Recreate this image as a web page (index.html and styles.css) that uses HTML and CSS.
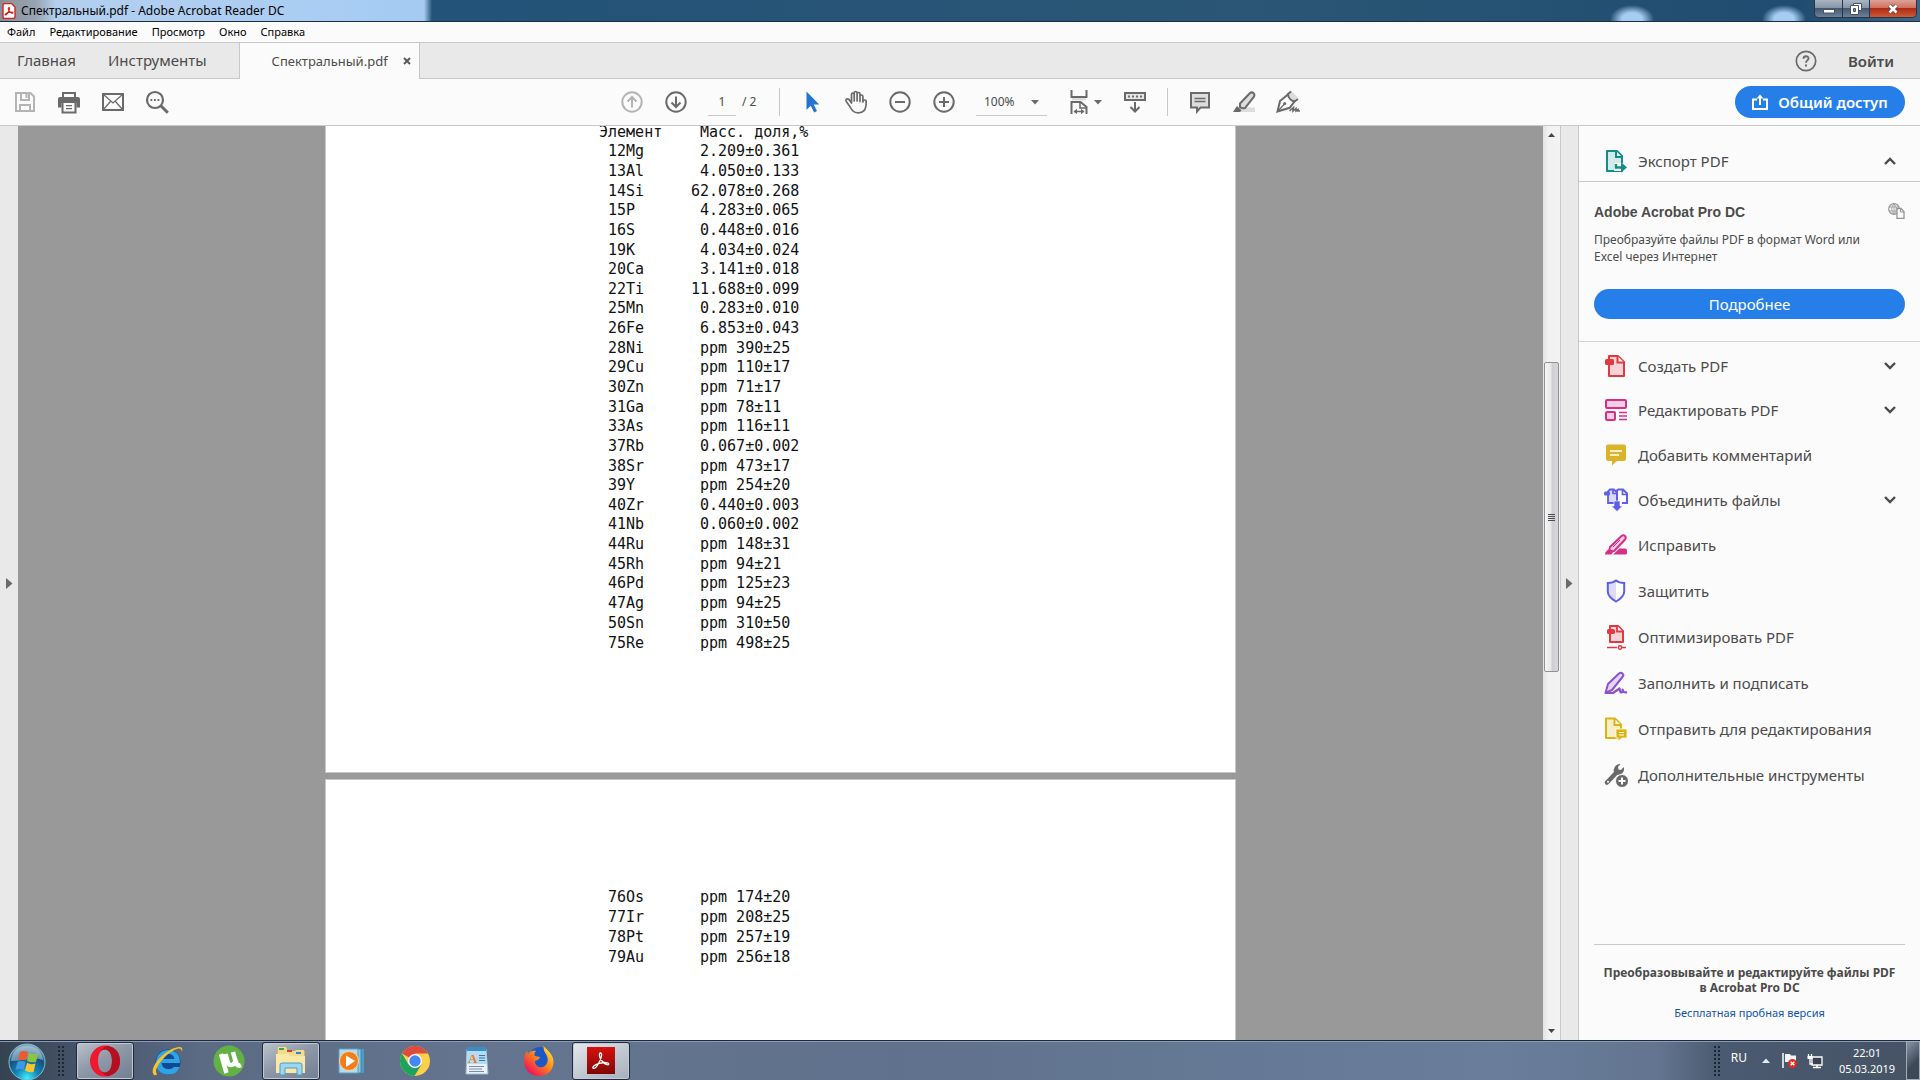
FILE: index.html
```html
<!DOCTYPE html>
<html lang="ru">
<head>
<meta charset="utf-8">
<title>Спектральный.pdf - Adobe Acrobat Reader DC</title>
<link rel="stylesheet" href="styles.css">
</head>
<body>
<header class="titlebar">
  <svg class="app-icon" width="14" height="16" viewBox="0 0 14 16"><path d="M1 2q0-1.500 1.500-1.500h7L13 4v10q0 1.500-1.500 1.500h-9Q1 15.500 1 14z" fill="#fff" stroke="#d8201d" stroke-width="1.400"/><path d="M7 4.500c1.200 0 .3 2-.3 3.500-.8 2-2.300 4.500-3.400 4-.9-.6 1.200-2.100 3.400-2.600 2-.4 4.300-.5 4.300.4 0 1-2.300.3-3.600-1.300C6.300 7.200 5.900 4.500 7 4.500z" fill="none" stroke="#d8201d" stroke-width="1.100"/></svg>
  <h1 class="window-title">Спектральный.pdf - Adobe Acrobat Reader DC</h1>
  <div class="window-buttons">
    <button class="win-btn win-min" aria-label="Свернуть"><svg width="14" height="12" viewBox="0 0 14 12"><rect x="1.500" y="6.500" width="11" height="3.500" fill="#fff" stroke="#4a5366"/></svg></button>
    <button class="win-btn win-max" aria-label="Восстановить"><svg width="14" height="14" viewBox="0 0 14 14"><path d="M4.500 1.500h8v7h-8z" fill="#fff" stroke="#4a5366"/><path d="M1.500 3.500h8v9h-8z" fill="#fff" stroke="#4a5366"/><path d="M4.500 6.500h2v3h-2z" fill="#7d8898" stroke="#4a5366"/></svg></button>
    <button class="win-btn win-close" aria-label="Закрыть"><svg width="14" height="12" viewBox="0 0 14 12"><path d="M3.500 2.500l7 7M10.500 2.500l-7 7" stroke="#5c3a3a" stroke-width="4"/><path d="M3.500 2.500l7 7M10.500 2.500l-7 7" stroke="#fff" stroke-width="2.600"/></svg></button>
  </div>
</header>

<nav class="menubar">
  <button>Файл</button><button>Редактирование</button><button>Просмотр</button><button>Окно</button><button>Справка</button>
</nav>

<div class="tabbar">
  <button class="tab-link">Главная</button>
  <button class="tab-link">Инструменты</button>
  <div class="doc-tab">
    <span>Спектральный.pdf</span>
    <button class="tab-close" aria-label="Закрыть вкладку"><svg width="8" height="8" viewBox="0 0 8 8"><path d="M1 1l6 6M7 1L1 7" stroke="#5a5a5a" stroke-width="2"/></svg></button>
  </div>
  <div class="tab-right">
    <button class="help" aria-label="Помощь"><svg width="22" height="22" viewBox="0 0 22 22" fill="none" stroke="#6a6a6a"><circle cx="11" cy="11" r="9.700" stroke-width="1.700"/><path d="M8.500 8.800c0-3.300 5-3.200 5-.4 0 2-2.500 2-2.500 4.400" stroke-width="1.900"/><path d="M11 14.500v2" stroke-width="2"/></svg></button>
    <button class="login">Войти</button>
  </div>
</div>

<div class="toolbar">
  <div class="tools-left">
    <button aria-label="Сохранить"><svg width="24" height="24" viewBox="0 0 24 24" fill="none" stroke="#b4b4b4" stroke-width="2"><path d="M3 3h14.500L21 6.500V21H3z"/><path d="M8 3v7h8V3M7 21v-6h10v6"/><path d="M13.500 4v4" stroke-width="2"/></svg></button>
    <button aria-label="Печать"><svg width="24" height="24" viewBox="0 0 24 24"><path d="M5 2h14v6h-2V4H7v4H5z" fill="#6a6a6a"/><path d="M1 9q0-2 2-2h18q2 0 2 2v8.500h-3.500V13h-15v4.500H1z" fill="#6a6a6a"/><path d="M5.500 13v9.500h13V13" fill="none" stroke="#6a6a6a" stroke-width="2"/><path d="M9 15.700h6M9 18.700h6" stroke="#6a6a6a" stroke-width="1.200"/></svg></button>
    <button aria-label="Отправить по почте"><svg width="24" height="24" viewBox="0 0 24 24" fill="none" stroke="#6a6a6a"><path d="M2 4h20v16H2z" stroke-width="2"/><path d="M2.500 4.500L12 13l9.500-8.500M2.500 19.500l7-8M21.500 19.500l-7-8" stroke-width="1.200"/></svg></button>
    <button aria-label="Поиск"><svg width="24" height="24" viewBox="0 0 24 24" fill="none" stroke="#6a6a6a"><circle cx="10" cy="10" r="8" stroke-width="2.200"/><path d="M15.800 15.800l7 7" stroke-width="3"/><path d="M5.500 10h1.800M9 10h1.800M12.500 10h1.800" stroke-width="1.800"/></svg></button>
  </div>
  <div class="tools-center">
    <button aria-label="Предыдущая страница"><svg width="24" height="24" viewBox="0 0 24 24" fill="none" stroke="#b4b4b4" stroke-width="2"><circle cx="12" cy="12" r="9.700"/><path d="M12 17.500V7M7.500 11.500L12 7l4.500 4.500"/></svg></button>
    <button aria-label="Следующая страница"><svg width="24" height="24" viewBox="0 0 24 24" fill="none" stroke="#6a6a6a" stroke-width="2"><circle cx="12" cy="12" r="9.700"/><path d="M12 6.500V17M7.500 12.500L12 17l4.500-4.500"/></svg></button>
    <div class="page-box">
      <input class="page-input" type="text" value="1" aria-label="Номер страницы">
      <span class="page-total">/ 2</span>
    </div>
    <span class="sep"></span>
    <button aria-label="Выделение"><svg width="24" height="24" viewBox="0 0 24 24"><path d="M6.500 1.500v18.300l4.300-4 3.300 6.700 2.900-1.400-3.300-6.500h5.500z" fill="#2274d0"/></svg></button>
    <button aria-label="Рука"><svg width="24" height="24" viewBox="0 0 24 24" fill="none" stroke="#6a6a6a" stroke-width="1.700" stroke-linejoin="round" stroke-linecap="round"><path d="M7.500 13V4.600c0-2 2.700-2 2.700 0V11M10.200 11V3c0-2 2.900-2 2.900 0v8M13.100 11V4c0-2 2.900-2 2.900 0v7.500M16 11.500V6.500c0-2 2.900-2 2.900 0V12M18.900 12c.2-2.800 3.400-2.500 3.300-.3 0 5-.7 7.200-2.200 8.900-2.600 2.900-8.500 2.900-11 .4-2-2-3.500-5.300-6.700-9.500-1.300-1.800.8-3.500 2.600-2 1 .8 1.800 2.200 2.600 3.500"/></svg></button>
    <button aria-label="Уменьшить"><svg width="24" height="24" viewBox="0 0 24 24" fill="none" stroke="#6a6a6a" stroke-width="2"><circle cx="12" cy="12" r="9.700"/><path d="M7 12h10"/></svg></button>
    <button aria-label="Увеличить"><svg width="24" height="24" viewBox="0 0 24 24" fill="none" stroke="#6a6a6a" stroke-width="2"><circle cx="12" cy="12" r="9.700"/><path d="M7 12h10M12 7v10"/></svg></button>
    <div class="zoom-box">
      <select class="zoom-select" aria-label="Масштаб"><option>100%</option></select>
      <svg class="caret" width="8" height="5" viewBox="0 0 8 5"><path d="M0 0h8L4 4.500z" fill="#6a6a6a"/></svg>
    </div>
    <button class="fit" aria-label="По ширине"><svg width="24" height="26" viewBox="0 0 24 26" fill="none" stroke="#6a6a6a" stroke-width="2"><path d="M5 10h14" stroke="#ddd" stroke-width="3"/><path d="M4.500 1v7h15V1M4.500 25V13h9l6 5v7"/><path d="M13 13v6h6" stroke-width="1.500"/><path d="M7.500 22.500h9" stroke-width="1.500"/><path d="M10 19.700v5.600L6.500 22.500zM14 19.700v5.600l3.500-2.800z" fill="#6a6a6a" stroke="none"/></svg><svg width="8" height="5" viewBox="0 0 8 5"><path d="M0 0h8L4 4.500z" fill="#6a6a6a"/></svg></button>
    <button aria-label="Прокрутка"><svg width="24" height="24" viewBox="0 0 24 24" fill="none" stroke="#6a6a6a" stroke-width="2"><path d="M2 3h20v7H2z" fill="#e6e6e6"/><path d="M5 6.500h14" stroke-dasharray="2 2"/><path d="M12 12v9M7.500 17l4.500 4.500 4.500-4.500"/></svg></button>
    <span class="sep"></span>
    <button aria-label="Комментарий"><svg width="24" height="24" viewBox="0 0 24 24"><path d="M3 3h18v14.500h-8.500L9 21.500v-4H3z" fill="#ddd" stroke="#6a6a6a" stroke-width="2"/><path d="M6.500 8.500h11M6.500 11.500h11" stroke="#6a6a6a" stroke-width="1.400"/></svg></button>
    <button aria-label="Выделить текст"><svg width="24" height="24" viewBox="0 0 24 24"><path d="M12 17.500h11V22H5z" fill="#ddd"/><path d="M8 13.500L17.800 3.200q2-1.700 3.800 0 1.500 1.600.2 3.700L13 18q-3 .8-5-1z" fill="#ddd" stroke="#6a6a6a" stroke-width="2"/><path d="M5 16l4.500 4.200L8 22H1z" fill="#6a6a6a"/></svg></button>
    <button aria-label="Подписать"><svg width="24" height="24" viewBox="0 0 24 24" fill="none" stroke="#6a6a6a" stroke-width="2"><path d="M12 4l3-3.500 7 7L18 11z" fill="#ddd" stroke="none"/><path d="M1.500 21.500L4 11l8-6.500c.3 3 3 6.500 6.500 7l-4.800 6.300z"/><path d="M11.500 4.500l3.500-3M18.500 11.500l3.500-2.500" /><path d="M1.500 21.500l6.500-7" stroke-width="1.300"/><circle cx="8.700" cy="13.500" r="1.500" fill="#6a6a6a" stroke="none"/><path d="M13.500 21l4-3.500-.5 3.500 3-2.500v2.500l2-1.500v1.500h2" stroke-width="1.600"/></svg></button>
  </div>
  <div class="tools-right">
    <button class="share"><svg width="16" height="17" viewBox="0 0 16 17" fill="none" stroke="#fff" stroke-width="2"><path d="M5 5.500H1V15h14V5.500h-4M8 11V2"/><path d="M4.500 4.500L8 .5l3.500 4z" fill="#fff" stroke="none"/></svg>Общий доступ</button>
  </div>
</div>

<div class="workspace">
  <div class="side-strip"><button aria-label="Открыть панель навигации"><svg width="7" height="11" viewBox="0 0 7 11"><path d="M0 0l6.500 5.500L0 11z" fill="#6a6a6a"/></svg></button></div>
  <main class="canvas">
    <section class="page page-one">
      <table class="data data-long">
        <thead><tr><th>Элемент</th><th>Масс. доля,%</th></tr></thead>
        <tbody>
          <tr><td>12Mg</td><td>2.209±0.361</td></tr>
          <tr><td>13Al</td><td>4.050±0.133</td></tr>
          <tr><td>14Si</td><td class="wide">62.078±0.268</td></tr>
          <tr><td>15P</td><td>4.283±0.065</td></tr>
          <tr><td>16S</td><td>0.448±0.016</td></tr>
          <tr><td>19K</td><td>4.034±0.024</td></tr>
          <tr><td>20Ca</td><td>3.141±0.018</td></tr>
          <tr><td>22Ti</td><td class="wide">11.688±0.099</td></tr>
          <tr><td>25Mn</td><td>0.283±0.010</td></tr>
          <tr><td>26Fe</td><td>6.853±0.043</td></tr>
          <tr><td>28Ni</td><td>ppm 390±25</td></tr>
          <tr><td>29Cu</td><td>ppm 110±17</td></tr>
          <tr><td>30Zn</td><td>ppm 71±17</td></tr>
          <tr><td>31Ga</td><td>ppm 78±11</td></tr>
          <tr><td>33As</td><td>ppm 116±11</td></tr>
          <tr><td>37Rb</td><td>0.067±0.002</td></tr>
          <tr><td>38Sr</td><td>ppm 473±17</td></tr>
          <tr><td>39Y</td><td>ppm 254±20</td></tr>
          <tr><td>40Zr</td><td>0.440±0.003</td></tr>
          <tr><td>41Nb</td><td>0.060±0.002</td></tr>
          <tr><td>44Ru</td><td>ppm 148±31</td></tr>
          <tr><td>45Rh</td><td>ppm 94±21</td></tr>
          <tr><td>46Pd</td><td>ppm 125±23</td></tr>
          <tr><td>47Ag</td><td>ppm 94±25</td></tr>
          <tr><td>50Sn</td><td>ppm 310±50</td></tr>
          <tr><td>75Re</td><td>ppm 498±25</td></tr>
        </tbody>
      </table>
    </section>
    <section class="page page-two">
      <table class="data data-short">
        <tbody>
          <tr><td>76Os</td><td>ppm 174±20</td></tr>
          <tr><td>77Ir</td><td>ppm 208±25</td></tr>
          <tr><td>78Pt</td><td>ppm 257±19</td></tr>
          <tr><td>79Au</td><td>ppm 256±18</td></tr>
        </tbody>
      </table>
    </section>
  </main>
  <div class="scrollbar">
    <svg width="7" height="4" viewBox="0 0 7 4"><path d="M0 4h7L3.500 0z" fill="#444"/></svg>
    <div class="track"><div class="thumb"><i></i><i></i><i></i><i></i></div></div>
    <svg width="7" height="4" viewBox="0 0 7 4"><path d="M0 0h7L3.500 4z" fill="#444"/></svg>
  </div>
  <div class="side-strip strip-right"><button aria-label="Скрыть панель инструментов"><svg width="7" height="11" viewBox="0 0 7 11"><path d="M0 0l6.500 5.500L0 11z" fill="#6a6a6a"/></svg></button></div>
  <aside class="panel">
    <button class="tool export">
      <svg width="24" height="24" viewBox="0 0 24 24"><path d="M3 2h10l5 5v15H3z" fill="#d0ebe8" stroke="#138d8a" stroke-width="2" stroke-linejoin="round"/><path d="M12 2v6h6" fill="#fff" stroke="#138d8a" stroke-width="2"/><path d="M11 14l-1 8h10v-8z" fill="#fbfbfb"/><path d="M12 15v3.500h6" fill="none" stroke="#138d8a" stroke-width="2.400"/><path d="M17 13l6 5.500-6 5z" fill="#138d8a"/></svg>
      <span>Экспорт PDF</span>
      <svg class="chev" width="12" height="8" viewBox="0 0 12 8"><path d="M1 7l5-5 5 5" fill="none" stroke="#4b4b4b" stroke-width="2.400"/></svg>
    </button>
    <section class="promo">
      <div class="promo-head">
        <h2>Adobe Acrobat Pro DC</h2>
        <svg width="17" height="16" viewBox="0 0 17 16" fill="none" stroke="#959595"><circle cx="6" cy="6" r="5.300" stroke-width="1.200"/><path d="M.8 4h10.400M.8 8h10M6 .7c-3 3-3 7.500 0 10.600M6 .7c3 3 3 7.500 0 10.600M6 .7v10.600" stroke-width=".8"/><path d="M9 5.500h4l3 3v7H9z" fill="#fbfbfb" stroke-width="1.300"/><path d="M12.500 5.500V9H16" /></svg>
      </div>
      <p>Преобразуйте файлы PDF в формат Word или Excel через Интернет</p>
      <button class="more">Подробнее</button>
    </section>
    <div class="tool-list">
      <button class="tool fold"><svg width="24" height="24" viewBox="0 0 24 24"><path d="M5 2h9l6 6v14H5z" fill="#f5d3d6" stroke="#de3b41" stroke-width="2" stroke-linejoin="round"/><path d="M13.500 2v6.500H20" fill="#fff" stroke="#de3b41" stroke-width="2"/><rect x="1" y="5" width="9" height="6" rx="1.500" fill="#de3b41"/></svg><span>Создать PDF</span><svg class="chev" width="12" height="8" viewBox="0 0 12 8"><path d="M1 1l5 5 5-5" fill="none" stroke="#4b4b4b" stroke-width="2.400"/></svg></button>
      <button class="tool fold"><svg width="24" height="24" viewBox="0 0 24 24" fill="#f4cfe3" stroke="#d62f88" stroke-width="2"><rect x="2" y="2" width="20" height="8" rx="1"/><rect x="2" y="14" width="9" height="8" rx="1"/><path d="M15 14.500h8M15 18h8M15 21.500h8" stroke-width="1.300"/></svg><span>Редактировать PDF</span><svg class="chev" width="12" height="8" viewBox="0 0 12 8"><path d="M1 1l5 5 5-5" fill="none" stroke="#4b4b4b" stroke-width="2.400"/></svg></button>
      <button class="tool"><svg width="24" height="24" viewBox="0 0 24 24"><path d="M4 1.500h16q2 0 2 2V16q0 2-2 2h-7l-5 4.500V18H4q-2 0-2-2V3.500q0-2 2-2z" fill="#dab428"/><path d="M6 8h12M6 12h9" stroke="#fff" stroke-width="1.600"/></svg><span>Добавить комментарий</span></button>
      <button class="tool fold"><svg width="24" height="24" viewBox="0 0 24 24"><path d="M4 3.500l2-2h4l3 3V15H4z" fill="#dad9f9" stroke="#5f5ee6" stroke-width="1.800"/><path d="M13 15V3q0-1.500 1.500-1.500H19l4 4V15h-5" fill="#fff" stroke="#5f5ee6" stroke-width="2"/><path d="M9 1.500v4h4M18.500 2v4.500H23" fill="none" stroke="#5f5ee6" stroke-width="1.700"/><rect x="0" y="3.500" width="6" height="4" rx="1.500" fill="#5f5ee6"/><path d="M10 13h6v5h2.500L13 23.500 7.500 18H10z" fill="#5f5ee6" stroke="#fbfbfb" stroke-width=".6"/></svg><span>Объединить файлы</span><svg class="chev" width="12" height="8" viewBox="0 0 12 8"><path d="M1 1l5 5 5-5" fill="none" stroke="#4b4b4b" stroke-width="2.400"/></svg></button>
      <button class="tool"><svg width="24" height="24" viewBox="0 0 24 24"><path d="M6 14L17.500 3q2-1.500 3.500 0t0 3.500L10 18q-3 .5-4-.5T6 14z" fill="#f7d0e5" stroke="#d62f88" stroke-width="2"/><path d="M9 14l7-7" stroke="#d62f88"/><path d="M5 16l4 4-2 1.500H1q0-3 4-5.500zM9 21.500l6.500-6H21q2 0 2 2V20q0 1.500-1.500 1.500z" fill="#d62f88"/></svg><span>Исправить</span></button>
      <button class="tool"><svg width="24" height="24" viewBox="0 0 24 24"><path d="M12 2q3 2.500 8.500 2.500v8c0 5-4 7.500-8.500 10-4.500-2.500-8.500-5-8.500-10v-8Q9 4.500 12 2z" fill="#fff"/><path d="M12 2v20.500c-4.500-2.500-8.500-5-8.500-10v-8Q9 4.500 12 2z" fill="#dcdbf8"/><path d="M12 1.500q3 2.500 8.200 2.500v8.500c0 5-3.700 7.500-8.200 10-4.500-2.500-8.200-5-8.200-10V4Q9 4 12 1.500z" fill="none" stroke="#5f5ee6" stroke-width="2"/></svg><span>Защитить</span></button>
      <button class="tool"><svg width="24" height="26" viewBox="0 0 24 26"><path d="M6 2h8l5 5v11H6z" fill="#f5d3d6" stroke="#de3b41" stroke-width="2" stroke-linejoin="round"/><path d="M13 2v5.500h6" fill="#fff" stroke="#de3b41" stroke-width="1.800"/><rect x="3" y="5" width="8" height="5" rx="1.500" fill="#de3b41"/><path d="M3 23.500h10M18 23.500h4" stroke="#de3b41" stroke-width="1.700"/><circle cx="16" cy="23.500" r="1.700" fill="none" stroke="#de3b41" stroke-width="1.500"/></svg><span>Оптимизировать PDF</span></button>
      <button class="tool"><svg width="24" height="24" viewBox="0 0 24 24" fill="none" stroke="#8c52cf" stroke-width="2" stroke-linejoin="round"><path d="M1.500 22l2.500-9L15 2.500q1.800-1.500 3.500 0t0 3.500L8 19z" fill="#e4d7f5"/><path d="M1.500 22H9l6.500-4.500q.5 4 2 4 1.500-.5 1-3 1 4 4.500 2.500" stroke-width="2.200"/></svg><span>Заполнить и подписать</span></button>
      <button class="tool"><svg width="24" height="24" viewBox="0 0 24 24"><path d="M2 1.500h9l6 6V21H2z" fill="#f6efcb" stroke="#dcb50c" stroke-width="2" stroke-linejoin="round"/><path d="M10.500 2v6H17" fill="#fff" stroke="#dcb50c" stroke-width="2"/><path d="M13 12h10v9h-5l-4 3v-3h-2v-9z" fill="#dcb50c" stroke="#fbfbfb" stroke-width=".8"/><path d="M15 15.500h5M15 18h5" stroke="#fff" stroke-width="1.200"/></svg><span>Отправить для редактирования</span></button>
      <button class="tool"><svg width="24" height="24" viewBox="0 0 24 24"><path d="M3 19.500L13 9" stroke="#6a6a6a" stroke-width="4.500" stroke-linecap="round"/><path d="M11 3.500q2-3 5.500-2.500L14 4l.5 2.500L17 7l2.500-3q1.500 3-1 6-2.500 2.500-6 1.500L10 9.500q-1-3 1-6z" fill="#6a6a6a"/><circle cx="4" cy="18.700" r="1" fill="#fff"/><circle cx="18" cy="18" r="6.500" fill="#6a6a6a" stroke="#fbfbfb"/><path d="M14.500 18h7M18 14.500v7" stroke="#fff" stroke-width="2"/></svg><span>Дополнительные инструменты</span></button>
    </div>
    <footer class="trial">
      <p>Преобразовывайте и редактируйте файлы PDF<br>в Acrobat Pro DC</p>
      <a href="#trial">Бесплатная пробная версия</a>
    </footer>
  </aside>
</div>

<footer class="taskbar">
  <button class="start" aria-label="Пуск"><svg width="38" height="38" viewBox="0 0 38 38"><defs><radialGradient id="orb" cx=".5" cy=".95" r=".9"><stop offset="0" stop-color="#3ff0ff"/><stop offset=".35" stop-color="#1387b8"/><stop offset=".7" stop-color="#15517c"/><stop offset="1" stop-color="#7ea5be"/></radialGradient></defs><circle cx="19" cy="19" r="18" fill="url(#orb)" stroke="#82bdd4"/><path d="M3 18Q5 3 19 3t16 14q-8-3-16-1T3 18z" fill="#d3e4ee" opacity=".45"/><path d="M12 9q4-2 8 0l-2 8.500q-4-2-8 0z" fill="#f0592a"/><path d="M21 10q4 2 9 .5L28 19q-5 1-9-1z" fill="#8cc63e"/><path d="M9.500 19q4-2 8 0l-2 8q-4-2-8 0z" fill="#3e9ae0"/><path d="M19 20q4 2 8.500.5l-2 8.500q-4.500 1-8.500-1.500z" fill="#fdc52c"/></svg></button>
  <span class="grip"></span>
  <div class="apps">
    <button class="app running" aria-label="Opera"><svg width="32" height="32" viewBox="0 0 32 32"><path fill-rule="evenodd" d="M16 .5a15 15.500 0 1 0 0 31 15 15.500 0 1 0 0-31zM16 4.500c4.500 0 7 5 7 11.500s-2.500 11.500-7 11.500S9 22.500 9 16s2.500-11.500 7-11.500z" fill="#f0182e"/><path d="M19 .8q12 3 12 15.200T19 31.200q-4-1-7-4.700 2 1 4 1c4.500 0 7-5 7-11.500S20.500 4.500 16 4.500q-2 0-4 1Q15 1.500 19 .8z" fill="#b5101f"/></svg></button>
    <button class="app" aria-label="Internet Explorer"><svg width="34" height="32" viewBox="0 0 34 32"><circle cx="18" cy="17" r="12.500" fill="#0d4a92"/><path d="M24.500 18H11.500q1 6 7 6 4 0 5-2h6q-2 7.500-11.500 7.500Q6.500 29 6 17.500 7 5.500 18.500 5 30 6 30 18zM12 14h12.500q-1-5-6.200-5T12 14z" fill="#2fa3e6"/><path d="M4 30C-2 24 14 3 30 2q3 0 2 5-.5-4-3.500-3.500C17 6 2 25 7 29q-1 2-3 1z" fill="#f7c22c"/></svg></button>
    <button class="app" aria-label="uTorrent"><svg width="32" height="32" viewBox="0 0 32 32"><circle cx="16" cy="16" r="15.500" fill="#63b045"/><path d="M8 9l5.500 19M12.500 9l2.500 9q1.500 3 5 1.500 3-2 2-5L20 7M22 14l2 5.500q1 2 4 .5" fill="none" stroke="#fff" stroke-width="4.500"/></svg></button>
    <button class="app running" aria-label="Проводник"><svg width="34" height="32" viewBox="0 0 34 32"><path d="M3 3h8l2 3h18v22H3z" fill="#d6b45a"/><path d="M4 2h8l2 4h7l1-1h8v6H4z" fill="#f3dc8c"/><path d="M5 3h5v2H5z" fill="#34a84a"/><path d="M13 5h5v2h-5z" fill="#d8402c"/><path d="M22 7h5v2h-5z" fill="#2f83d6"/><path d="M2 9h12l2 2h15v17H2z" fill="#f9e8a6"/><path d="M6 20q0-2 2-2h18q2 0 2 2v10h-5v-7H11v7H6z" fill="#9bd7ef" stroke="#4f9cc4"/></svg></button>
    <button class="app" aria-label="Windows Media Player"><svg width="30" height="28" viewBox="0 0 30 28"><path d="M6 2h20v24H6z" fill="#4c9ac6"/><path d="M4 2h19v24H4z" fill="#8cc8e4" stroke="#4588ae"/><path d="M1 2h19v24H1z" fill="#b4dcee" stroke="#5a9fc2"/><circle cx="11" cy="14" r="9.500" fill="#f07e1c" stroke="#fbd3a2"/><path d="M8 8.500L17 14l-9 6z" fill="#fff"/></svg></button>
    <button class="app" aria-label="Google Chrome"><svg width="30" height="30" viewBox="0 0 30 30"><circle cx="15" cy="15" r="15" fill="#fcd04b"/><path d="M15 15L2 7.500A15 15 0 0 1 28 7.500H15z" fill="#dc4b3e"/><path d="M2 7.500A15 15 0 0 0 14.500 30L21.500 18.500 15 15 8.500 18.500z" fill="#1da260"/><path d="M8 7.500h20H15v7z" fill="#dc4b3e"/><circle cx="15" cy="15" r="7" fill="#fff"/><circle cx="15" cy="15" r="5.700" fill="#4587f3"/></svg></button>
    <button class="app" aria-label="WordPad"><svg width="24" height="28" viewBox="0 0 24 28"><path d="M2 2h19l2 25H1z" fill="#e9f2fa" stroke="#9ebcd4"/><path d="M2 0h19v4H2z" fill="#3a8ec7"/><path d="M2 4h19l.8 13H1.500z" fill="#b3dcf2"/><path d="M14 8.500h6M14 11h6M14 13.500h6" stroke="#3c74a8" stroke-width="1.200"/><path d="M4 19.500h15M4 22h13M4 24.500h15" stroke="#7e8ca0"/><text x="3" y="16" class="wordpad-letter">A</text></svg></button>
    <button class="app" aria-label="Firefox"><svg width="32" height="32" viewBox="0 0 32 32"><defs><linearGradient id="fox" x1=".9" y1=".1" x2=".2" y2=".9"><stop offset="0" stop-color="#ffe03a"/><stop offset=".45" stop-color="#ff8a16"/><stop offset="1" stop-color="#f0145a"/></linearGradient></defs><circle cx="17" cy="14" r="12" fill="#1c58c8"/><path d="M20 1c5 4 11 9 10.500 17C30 26 24 31 16 31S1 25 1 16c0-4 1-7 3-10l1 3c2-3 5-4 8-3-2 2-2 4-1 5l5 1q-1 3-5 4c0 5 4 7 8 6 5-2 6-8 3-13-2-3-3-5-2-8z" fill="url(#fox)"/></svg></button>
    <button class="app running active" aria-label="Adobe Acrobat Reader"><svg width="28" height="28" viewBox="0 0 28 28"><defs><linearGradient id="pdf" x1="0" y1="0" x2="0" y2="1"><stop offset="0" stop-color="#d8100c"/><stop offset="1" stop-color="#7d0705"/></linearGradient></defs><path d="M0 0h28v27H0z" fill="url(#pdf)"/><path d="M13.500 6c2 0 1 4-.5 7.500-2 4.500-5 8.500-6.800 7.800-1.600-1 2-4 6.300-5 4-1 9.300-1.300 9.300.7 0 2-4.500 0-6.800-3C12.500 11.500 11.500 6 13.500 6z" fill="none" stroke="#fff" stroke-width="1.300"/></svg></button>
  </div>
  <div class="tray">
    <span class="grip"></span>
    <span class="lang">RU</span>
    <button class="tray-up" aria-label="Отображать скрытые значки"><svg width="8" height="5" viewBox="0 0 8 5"><path d="M0 5l4-4.500L8 5z" fill="#e8ecf2"/></svg></button>
    <svg width="17" height="17" viewBox="0 0 17 17"><path d="M2 1v15" stroke="#fff" stroke-width="1.500"/><path d="M4 2h5l1 1.500h5V10H4z" fill="#f2f4f7"/><circle cx="11.500" cy="11.500" r="4.500" fill="#dc2e22"/><path d="M9.700 9.700l3.600 3.600M13.300 9.700l-3.600 3.600" stroke="#fff" stroke-width="1.500"/></svg>
    <svg width="16" height="16" viewBox="0 0 16 16"><path d="M5 4h10v8H5z" fill="#3a4250" stroke="#fff" stroke-width="1.300"/><path d="M6 14.500h8M10 12v2" stroke="#fff" stroke-width="1.500"/><path d="M1.500 1v3M4.500 1v3M3 5v6h3" stroke="#fff" stroke-width="1.300" fill="none"/><path d="M.5 3h5v3h-5z" fill="#fff"/></svg>
    <div class="clock"><span>22:01</span><span>05.03.2019</span></div>
    <button class="show-desktop" aria-label="Свернуть все окна"></button>
  </div>
</footer>
</body>
</html>
```
FILE: styles.css
```css
* { box-sizing: border-box; }
body {
  margin: 0;
  height: 100vh;
  display: flex;
  flex-direction: column;
  overflow: hidden;
  background: #fbfbfb;
  color: #4b4b4b;
  font: 12px/16px "Noto Sans", "Open Sans", sans-serif;
}
button {
  margin: 0;
  padding: 0;
  border: 0;
  background: none;
  color: inherit;
  font: inherit;
}
svg { display: block; flex: none; }
h1, h2, p { margin: 0; }

/* Window frame */
.titlebar {
  display: flex;
  align-items: center;
  flex: none;
  height: 22px;
  padding: 0 3px 0 2px;
  gap: 5px;
  border-bottom: 1px solid #1c2c42;
  background:
    radial-gradient(ellipse 22px 14px at 1632px 19px, #a5cdf2 45%, transparent),
    radial-gradient(ellipse 22px 14px at 1784px 19px, #a5cdf2 45%, transparent),
    linear-gradient(90deg, #8a8f96 0, #98a4b2 36px, #b4cfee 56px, #aacdf2 300px, #a5cbf3 424px, #235379 432px, #2b5675 1250px, #1f4c70 1800px, #3f6684 100%);
}
.window-title {
  flex: 1;
  color: #000;
  font-size: 12px;
  font-weight: 400;
}
.window-buttons {
  display: flex;
  align-self: flex-start;
  height: 18px;
  border: 1px solid #26354a;
  border-top: 0;
  border-radius: 0 0 5px 5px;
  overflow: hidden;
}
.win-btn {
  display: flex;
  align-items: center;
  justify-content: center;
  background: linear-gradient(#a9b5c3 0, #8796a7 45%, #45586f 50%, #6c8299 100%);
}
.win-min { width: 28px; border-right: 1px solid #26354a; }
.win-max { width: 27px; border-right: 1px solid #26354a; }
.win-close {
  width: 46px;
  background: linear-gradient(#dba396 0, #cf7262 45%, #b12a15 50%, #cc5a35 100%);
}

.menubar {
  display: flex;
  flex: none;
  align-items: center;
  gap: 14px;
  height: 21px;
  padding: 0 7px;
  border-bottom: 1px solid #c8c8c8;
  color: #000;
  font-size: 11px;
}

/* Tabs */
.tabbar {
  display: flex;
  flex: none;
  height: 36px;
  background: #e9e9e9;
  font-size: 15px;
}
.tab-link { padding-bottom: 1px; border-bottom: 1px solid #c8c8c8; }
.tab-link:first-child { padding-left: 17px; padding-right: 16px; }
.tab-link:nth-child(2) { padding-left: 16px; padding-right: 32px; }
.doc-tab {
  display: flex;
  align-items: center;
  gap: 15px;
  width: 181px;
  padding-left: 32px;
  border: solid #c8c8c8;
  border-width: 0 1px;
  background: #fbfbfb;
  font-size: 13px;
}
.tab-right {
  display: flex;
  flex: 1;
  align-items: center;
  justify-content: flex-end;
  gap: 31px;
  padding-right: 26px;
  border-bottom: 1px solid #c8c8c8;
}
.login { font-weight: 600; }

/* Toolbar */
.toolbar {
  display: grid;
  grid-template-columns: 1fr auto 1fr;
  align-items: center;
  flex: none;
  height: 47px;
  padding: 0 13px;
  border-bottom: 1px solid #c8c8c8;
}
.tools-left { display: flex; gap: 20px; }
.tools-center { display: flex; align-items: center; gap: 20px; }
.tools-right { display: flex; justify-content: flex-end; padding-right: 2px; }
.page-box { display: flex; align-items: center; gap: 6px; }
.page-input {
  width: 28px;
  height: 28px;
  padding: 0;
  border: 0;
  border-bottom: 1px solid #c8c8c8;
  background: none;
  color: inherit;
  font: inherit;
  text-align: center;
}
.page-total { width: 17px; white-space: nowrap; }
.sep { width: 1px; height: 28px; background: #c8c8c8; }
.zoom-box { position: relative; width: 71px; }
.zoom-select {
  width: 100%;
  height: 28px;
  padding: 0 8px;
  appearance: none;
  border: 0;
  border-bottom: 1px solid #c8c8c8;
  border-radius: 0;
  background: none;
  color: inherit;
  font: inherit;
}
.caret { position: absolute; right: 8px; top: 12px; }
.fit { display: flex; align-items: center; gap: 3px; width: 36px; }
.share {
  display: flex;
  align-items: center;
  justify-content: center;
  gap: 10px;
  width: 170px;
  height: 32px;
  border-radius: 16px;
  background: #267fe9;
  color: #fff;
  font-size: 15px;
  font-weight: 600;
}

/* Document area */
.workspace { display: flex; flex: 1; min-height: 0; }
.side-strip {
  display: flex;
  align-items: center;
  justify-content: center;
  flex: none;
  width: 18px;
  background: #e9e9e9;
}
.strip-right { width: 19px; border: solid #c8c8c8; border-width: 0 1px; }
.canvas {
  flex: 1;
  overflow: hidden;
  background: #999;
}
.page {
  width: 911px;
  margin: 0 auto 6px;
  border: 1px solid #c8c8c8;
  background: #fff;
}
.page-one { margin-top: -3px; padding: 0 0 119px 273px; border-top: 0; }
.page-two { padding: 108px 0 400px 273px; }
.data {
  border-collapse: collapse;
  color: #111;
  font: 15px/19px "DejaVu Sans Mono", monospace;
}
.data-long { height: 530px; }
.data-short { height: 79px; }
.data th { padding: 0; font-weight: 400; text-align: left; }
.data td { padding: 0 0 0 9px; }
.data th:first-child, .data td:first-child { width: 92px; }
.data th + th { padding-left: 9px; }
.data .wide { padding-left: 0; }

.scrollbar {
  display: flex;
  flex-direction: column;
  align-items: center;
  flex: none;
  width: 17px;
  padding: 7px 0;
  background: linear-gradient(90deg, #e3e3e3, #f1f1f1 30%, #f3f3f3);
}
.track { flex: 1; padding-top: 225px; }
.thumb {
  display: flex;
  flex-direction: column;
  align-items: center;
  justify-content: center;
  gap: 1px;
  width: 15px;
  height: 310px;
  border: 1px solid #8f8f94;
  border-radius: 2px;
  background: linear-gradient(90deg, #f6f6f6 0, #e8e8ea 45%, #cfcfd3 55%, #d8d8dc 100%);
}
.thumb i { width: 7px; height: 1px; background: #4c4c50; }

/* Tools panel */
.panel {
  display: flex;
  flex-direction: column;
  flex: none;
  width: 341px;
}
.tool {
  display: flex;
  align-items: center;
  gap: 10px;
  width: 100%;
  height: 46px;
  padding: 0 24px 0 25px;
  font-size: 15px;
  text-align: left;
}
.tool span { flex: 1; white-space: nowrap; }
.fold { height: 44px; }
.export { height: 56px; padding-top: 15px; padding-bottom: 0; border-bottom: 1px solid #c8c8c8; }
.promo {
  padding: 21px 15px 22px;
  border-bottom: 1px solid #d2d2d2;
}
.promo-head { display: flex; justify-content: space-between; }
.promo h2 {
  font: bold 14px/18px "Liberation Sans", Arial, sans-serif;
}
.promo p { margin-top: 10px; padding-right: 20px; line-height: 17px; }
.more {
  display: block;
  width: 100%;
  height: 30px;
  margin-top: 24px;
  border-radius: 15px;
  background: #267fe9;
  color: #fff;
  font-size: 15px;
}
.tool-list { padding-top: 2px; }
.trial {
  margin: auto 15px 0;
  padding: 20px 0;
  border-top: 1px solid #c8c8c8;
  line-height: 15px;
  text-align: center;
}
.trial p { font-weight: 700; white-space: nowrap; }
.trial a {
  display: block;
  margin-top: 10px;
  color: #0d54a8;
  font-size: 11px;
  text-decoration: none;
}

/* Taskbar */
.taskbar {
  display: flex;
  align-items: center;
  flex: none;
  height: 40px;
  border-top: 1px solid #1d2a3d;
  box-shadow: inset 0 1px #8b9db6;
  background: linear-gradient(90deg, #35424f 0, #46546a 80px, #5b6b84 200px, #65758f 500px, #5f718c 900px, #6a7e9c 1500px, #62748f 1660px, #4a5a70 1720px, #465365 100%);
  color: #fff;
}
.start { margin: 3px 12px 0 8px; }
.grip {
  width: 8px;
  height: 30px;
  background: radial-gradient(circle at 1px 1px, #1c2634 1px, transparent 1px) 0 0 / 4px 4px;
}
.apps { display: flex; gap: 4px; margin-left: 10px; }
.app {
  display: flex;
  align-items: center;
  justify-content: center;
  width: 58px;
  height: 38px;
}
.running {
  border: 1px solid #20293a;
  border-radius: 3px;
  box-shadow: inset 0 0 0 1px #c3cad5;
  background: linear-gradient(150deg, #bcc3cd 0, #8f99a8 45%, #717e92 100%);
}
.active { background: linear-gradient(150deg, #e6e9ee 0, #c3cad4 50%, #a4aebc 100%); }
.wordpad-letter { font: bold 13px "Liberation Serif", serif; fill: #ee7b1b; }
.tray {
  display: flex;
  align-items: center;
  height: 100%;
  margin-left: auto;
}
.lang { margin: 0 15px 6px 9px; }
.tray-up { margin-right: 11px; }
.tray svg + svg { margin-left: 9px; }
.clock {
  display: flex;
  flex-direction: column;
  align-items: center;
  width: 60px;
  margin: 0 9px 0 14px;
  font-size: 11px;
}
.show-desktop {
  width: 14px;
  height: 39px;
  border: 1px solid #a2adba;
  background: linear-gradient(135deg, #8893a2, #3e4958 60%);
}
```
